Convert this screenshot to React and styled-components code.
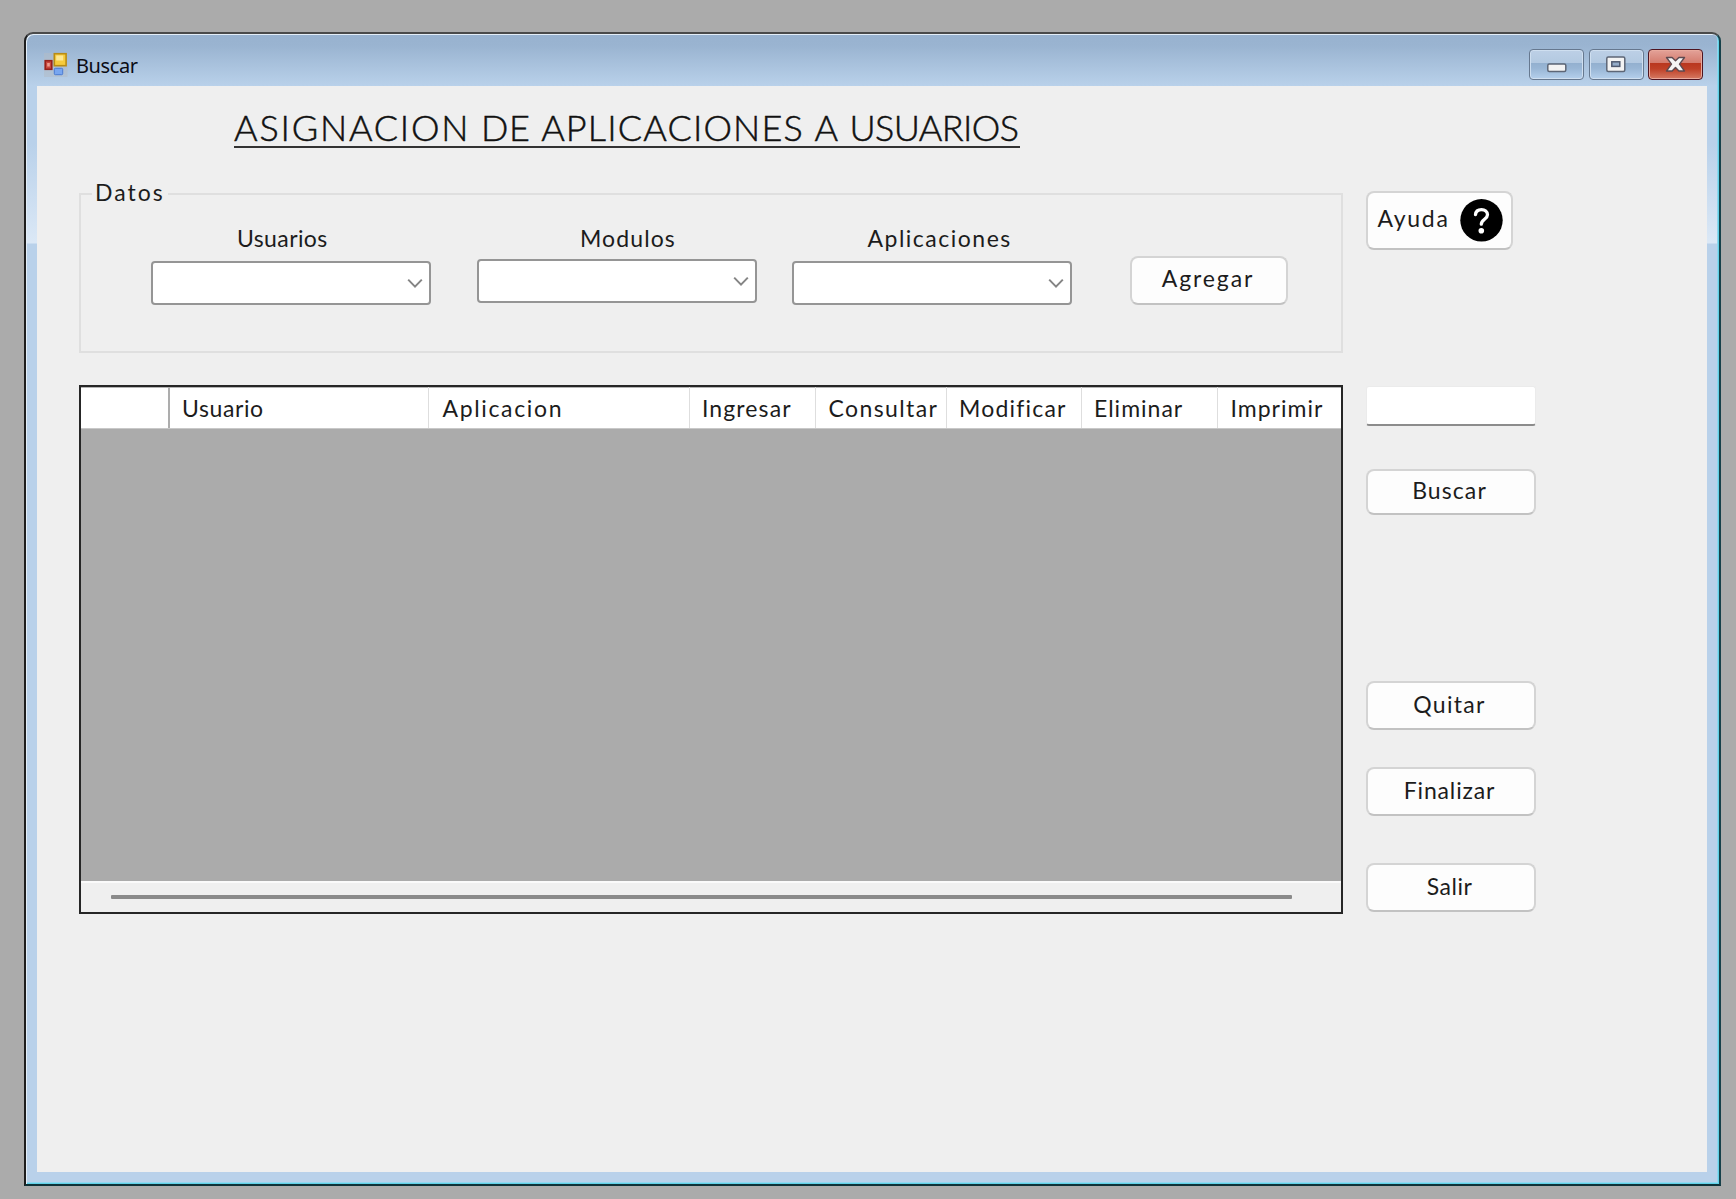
import React from "react";
import styled, { createGlobalStyle } from "styled-components";

const GlobalStyle = createGlobalStyle`
  * { box-sizing: border-box; }
  body { margin: 0; background: #ababab; }
`;

const Desktop = styled.main`
  height: 1199px;
  padding: 32px 0 0 24px;
  overflow: hidden;
  background: #ababab;
  color: #1c1c1c;
  font-family: Lato, "Open Sans", sans-serif;
`;

const Window = styled.section`
  width: 1697px;
  height: 1154px;
  display: flex;
  flex-direction: column;
  padding: 0 12px 12px 11px;
  border: 2px solid #1d1d1d;
  border-top-color: #4a4a4a;
  border-right-color: #17414a;
  border-bottom-color: #0f3238;
  border-radius: 9px 9px 0 0;
  background: linear-gradient(
    #98b2cf 0, #9ab4d1 12px, #b9d1ea 52px, #b9d1ea 110px, #dbe8f6 208px,
    #dbe8f6 209px, #b9d1ea 210px
  );
  box-shadow: inset 1px 1px 0 #e4eef8, inset -1px -1px 0 #5fd0e6, inset -2px -2px 0 #93d7ee;
`;

const TitleBar = styled.header`
  flex: 0 0 52px;
  display: flex;
  align-items: flex-start;
  padding: 15px 4px 0 6px;
`;

const Caption = styled.span`
  flex: 1;
  margin-left: 7px;
  padding-top: 3px;
  font: 20px/28px "Noto Sans", "Open Sans", sans-serif;
  letter-spacing: -0.4px;
  color: #0c0c14;
`;

const Controls = styled.div`
  display: flex;
  gap: 4.5px;
`;

const ControlButton = styled.button`
  width: 55px;
  height: 31px;
  display: grid;
  place-items: center;
  padding: 0;
  border: 1.5px solid ${(p) => (p.$danger ? "#4e1420" : "#66788f")};
  border-radius: 4px;
  background: ${(p) =>
    p.$danger
      ? "linear-gradient(#e3a299 0, #d47c6e 44%, #b9371f 46%, #bf4027 65%, #d67a63 100%)"
      : "linear-gradient(#bdd0e6 0, #b3c9e1 44%, #93b0cf 46%, #9ab7d6 65%, #b5d0ec 100%)"};
  box-shadow: inset 0 0 0 1px ${(p) => (p.$danger ? "#e9a99c" : "#cfdff0")};
`;

const Client = styled.div`
  flex: 1;
  display: flex;
  align-items: flex-start;
  gap: 22.5px;
  padding: 22px 0 0 42px;
  background: #efefef;
`;

const Content = styled.div`
  width: 1264px;
  display: flex;
  flex-direction: column;
`;

const Title = styled.h1`
  align-self: flex-start;
  width: 786px;
  height: 40px;
  margin: 0 0 30px 155px;
  border-bottom: 2px solid #333;
  font-size: 36px;
  font-weight: 300;
  line-height: 39px;
  word-spacing: 1px;
  color: #111;
  -webkit-text-stroke: 0.5px #111;
  white-space: nowrap;
`;

const Word = styled.span`
  letter-spacing: ${(p) => p.$track}px;
`;

const Text = styled.span`
  font-size: 23px;
  line-height: 28px;
  letter-spacing: ${(p) => p.$track}px;
  white-space: nowrap;
`;

const GroupBox = styled.fieldset`
  height: 175px;
  margin: 0 0 32px;
  padding: 0;
  border: 2px solid #dfdfdf;
`;

const Legend = styled.legend`
  height: 32px;
  margin-left: 11px;
  padding: 0 3px 4px 3px;
  line-height: 28px;
`;

const Fields = styled.div`
  display: flex;
  padding: 14px 0 0 70px;
`;

const Field = styled.label`
  width: 280px;
  display: flex;
  flex-direction: column;
  gap: ${(p) => p.$gap}px;
  margin-right: ${(p) => p.$after}px;
`;

const FieldName = styled(Text)`
  padding-left: ${(p) => p.$indent}px;
`;

const Combo = styled.span`
  height: 43.5px;
  display: flex;
  align-items: center;
  justify-content: flex-end;
  padding: 1px 6px 0 0;
  border: 2px solid #959595;
  border-radius: 4px;
  background: #fff;
`;

const Button = styled.button`
  width: ${(p) => p.$w || 170}px;
  height: ${(p) => p.$h || 49}px;
  display: flex;
  align-items: center;
  justify-content: center;
  margin: ${(p) => p.$top || 0}px 0 0;
  padding: 0 2px 4px 0;
  border: 2px solid #d4d4d4;
  border-bottom-color: #c2c2c2;
  border-radius: 8px;
  background: #fdfdfd;
  color: inherit;
  font-family: inherit;
`;

const HelpButton = styled(Button)`
  justify-content: space-between;
  padding: 0 8px 0 10px;
  & > span { margin-top: -5px; }
`;

const Grid = styled.section`
  height: 529px;
  display: flex;
  flex-direction: column;
  border: 2px solid #262626;
  background: #ababab;
`;

const HeaderRow = styled.div`
  flex: 0 0 42px;
  display: grid;
  grid-template-columns: 89px 259px 261px 126px 131px 135px 136px 1fr;
  background: #fff;
  border-bottom: 1px solid #c8c8c8;
  box-shadow: inset 0 1px 0 #b4b4b4;
`;

const HeaderCell = styled.div`
  display: flex;
  align-items: center;
  padding: 1px 0 0 ${(p) => p.$pad || 0}px;
  border-right: ${(p) => (p.$corner ? "2px solid #adadad" : "1px solid #dedede")};
  &:last-child { border-right: 0; }
`;

const ScrollBar = styled.div`
  height: 31px;
  margin-top: auto;
  padding: 12px 49px 0 30px;
  border-top: 2px solid #fafafa;
  background: #efefef;
`;

const Thumb = styled.div`
  height: 4px;
  border-radius: 1px;
  background: #8a8a8a;
`;

const Side = styled.aside`
  width: 170px;
  display: flex;
  flex-direction: column;
  align-items: flex-start;
  padding-top: 83px;
`;

const SearchInput = styled.input`
  width: 170px;
  height: 40px;
  margin-top: 136px;
  padding: 0 8px;
  border: 1px solid #ebebeb;
  border-bottom: 2px solid #8c8c8c;
  border-radius: 3px;
  outline: none;
  background: #fff;
`;

const FormIcon = () => (
  <svg width="26" height="30" viewBox="0 0 26 30">
    <rect x="1" y="4" width="23.5" height="24" fill="#b3bcc6" opacity="0.55" />
    <rect x="11.3" y="4.7" width="11.8" height="12" fill="#f6cb3c" stroke="#b98c14" strokeWidth="1.6" />
    <rect x="13.2" y="6.5" width="7" height="5" fill="#fde793" />
    <rect x="2.2" y="11.7" width="6.6" height="8.6" fill="#c8453c" stroke="#96211c" strokeWidth="1.6" />
    <rect x="4.2" y="14" width="2.6" height="3.5" fill="#ee9c90" />
    <rect x="11.3" y="19.3" width="8.4" height="6.4" rx="1" fill="#78a6f0" stroke="#4a7bd2" />
  </svg>
);

const MinimizeIcon = () => (
  <svg width="20" height="18" viewBox="0 0 20 18">
    <rect x="0.8" y="8" width="18" height="7.5" rx="1.5" fill="#f3f3f3" stroke="#5d6676" strokeWidth="1.5" />
  </svg>
);

const RestoreIcon = () => (
  <svg width="20" height="18" viewBox="0 0 20 18">
    <rect x="0.8" y="1" width="18" height="14.5" rx="1.5" fill="#f3f3f3" stroke="#5d6676" strokeWidth="1.5" />
    <rect x="5.8" y="5.8" width="8" height="4.6" fill="#93abc8" stroke="#4f5a70" strokeWidth="1.5" />
  </svg>
);

const CloseIcon = () => (
  <svg width="22" height="18" viewBox="0 0 22 18">
    <path
      d="M1.5 1.500h5.600L10.500 4.800l3.400-3.300H19.500L14.500 8.200l5 6.800h-5.600L10.500 11.400l-3.400 3.600H1.500l5-6.800z"
      fill="#f5f5f5" stroke="#5e4a50" strokeWidth="1.4" strokeLinejoin="round"
    />
  </svg>
);

const Chevron = () => (
  <svg width="16" height="11" viewBox="0 0 16 11" fill="none" stroke="#858585" strokeWidth="2">
    <path d="M1.2 1.6 8 8.6l6.8-7" />
  </svg>
);

const HelpIcon = () => (
  <svg width="43" height="43" viewBox="0 0 43 43">
    <circle cx="21.5" cy="21.3" r="21.2" fill="#000" />
    <path
      d="M15.5 15.6c.3-3.100 2.700-5 6-5s6 2 6 5.200c0 4.300-6.200 4.600-6.200 9.400"
      fill="none" stroke="#fff" strokeWidth="3.3" strokeLinecap="round"
    />
    <circle cx="21.3" cy="31.8" r="2.8" fill="#fff" />
  </svg>
);

const titleWords = [
  { text: "ASIGNACION", track: 1.8 },
  { text: "DE", track: 0.5 },
  { text: "APLICACIONES", track: 1.15 },
  { text: "A", track: 0.5 },
  { text: "USUARIOS", track: -0.6 },
];

const fields = [
  { name: "Usuarios", track: 0.4, indent: 86, gap: 9, after: 46 },
  { name: "Modulos", track: 1.1, indent: 103, gap: 7, after: 35 },
  { name: "Aplicaciones", track: 1.5, indent: 75.5, gap: 9, after: 58 },
];

const columns = [
  { name: "Usuario", track: 0.6, pad: 12 },
  { name: "Aplicacion", track: 1.65, pad: 13.5 },
  { name: "Ingresar", track: 1.1, pad: 12 },
  { name: "Consultar", track: 1.4, pad: 12.5 },
  { name: "Modificar", track: 1.2, pad: 12 },
  { name: "Eliminar", track: 1, pad: 12 },
  { name: "Imprimir", track: 1, pad: 12.5 },
];

const actions = [
  { name: "Buscar", track: 1.08, height: 46, top: 43 },
  { name: "Quitar", track: 1.3, top: 166 },
  { name: "Finalizar", track: 0.85, top: 37 },
  { name: "Salir", track: 0.5, top: 47 },
];

export default function App() {
  return (
    <Desktop>
      <GlobalStyle />
      <Window>
        <TitleBar>
          <FormIcon />
          <Caption>Buscar</Caption>
          <Controls>
            <ControlButton aria-label="Minimizar"><MinimizeIcon /></ControlButton>
            <ControlButton aria-label="Restaurar"><RestoreIcon /></ControlButton>
            <ControlButton aria-label="Cerrar" $danger><CloseIcon /></ControlButton>
          </Controls>
        </TitleBar>
        <Client>
          <Content>
            <Title>
              {titleWords.map((w, i) => (
                <React.Fragment key={w.text}>
                  {i > 0 && " "}
                  <Word $track={w.track}>{w.text}</Word>
                </React.Fragment>
              ))}
            </Title>
            <GroupBox>
              <Legend><Text $track={2}>Datos</Text></Legend>
              <Fields>
                {fields.map((f) => (
                  <Field key={f.name} $gap={f.gap} $after={f.after}>
                    <FieldName $track={f.track} $indent={f.indent}>{f.name}</FieldName>
                    <Combo><Chevron /></Combo>
                  </Field>
                ))}
                <Button $w={158} $top={31.5}><Text $track={1.9}>Agregar</Text></Button>
              </Fields>
            </GroupBox>
            <Grid>
              <HeaderRow>
                <HeaderCell $corner />
                {columns.map((c) => (
                  <HeaderCell key={c.name} $pad={c.pad}><Text $track={c.track}>{c.name}</Text></HeaderCell>
                ))}
              </HeaderRow>
              <ScrollBar><Thumb /></ScrollBar>
            </Grid>
          </Content>
          <Side>
            <HelpButton $w={147} $h={59}>
              <Text $track={1.7}>Ayuda</Text>
              <HelpIcon />
            </HelpButton>
            <SearchInput aria-label="Usuario a buscar" />
            {actions.map((a) => (
              <Button key={a.name} $h={a.height} $top={a.top}><Text $track={a.track}>{a.name}</Text></Button>
            ))}
          </Side>
        </Client>
      </Window>
    </Desktop>
  );
}
